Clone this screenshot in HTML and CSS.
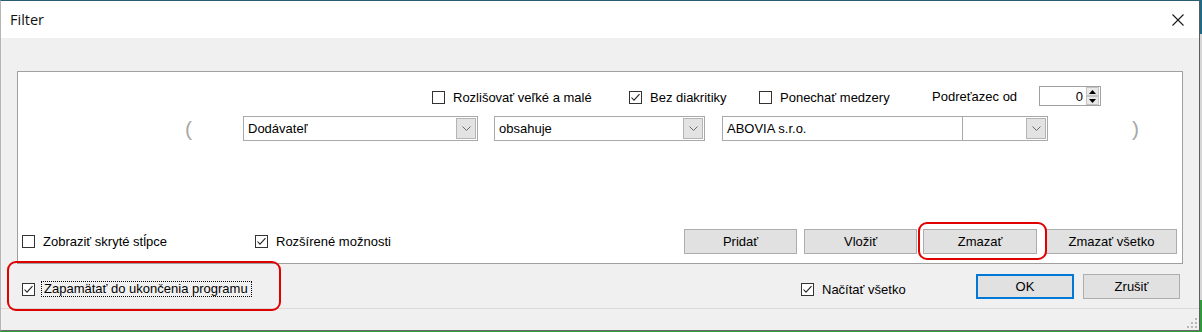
FILE: index.html
```html
<!DOCTYPE html>
<html lang="sk">
<head>
<meta charset="utf-8">
<title>Filter</title>
<link rel="stylesheet" href="styles.css">
</head>
<body>
<div class="window">
  <div class="titlebar">
    <span class="title">Filter</span>
    <svg class="close" width="12" height="12" viewBox="0 0 12 12"><path d="M0.5 0.5 L11.5 11.5 M11.5 0.5 L0.5 11.5" stroke="#1a1a1a" stroke-width="1.1" fill="none"/></svg>
  </div>
  <div class="client">
    <div class="panel">
      <div class="row row-opts">
        <label class="cb w-case"><span class="box"></span><span class="cb-text">Rozlišovať veľké a malé</span></label>
        <label class="cb w-diak"><span class="box"><svg width="11" height="11" viewBox="0 0 11 11"><path d="M1.5 5.5 L4 8.2 L9.5 2.2" stroke="#222" stroke-width="1.1" fill="none"/></svg></span><span class="cb-text">Bez diakritiky</span></label>
        <label class="cb w-space"><span class="box"></span><span class="cb-text">Ponechať medzery</span></label>
        <span class="sub-label">Podreťazec od</span>
        <div class="spin">
          <span class="spin-val">0</span>
          <div class="spin-btns">
            <span class="spin-btn"><svg width="9" height="5" viewBox="0 0 9 5"><path d="M4.5 0 L9 5 L0 5 Z" fill="#000"/></svg></span>
            <span class="spin-btn"><svg width="9" height="5" viewBox="0 0 9 5"><path d="M0 0 L9 0 L4.5 5 Z" fill="#000"/></svg></span>
          </div>
        </div>
      </div>
      <div class="row row-cond">
        <span class="paren paren-open">(</span>
        <div class="combo combo-col">
          <span class="combo-text">Dodávateľ</span>
          <span class="drop"><svg width="9" height="5" viewBox="0 0 9 5"><path d="M0.5 0.5 L4.5 4.5 L8.5 0.5" stroke="#6a6a6a" stroke-width="1" fill="none"/></svg></span>
        </div>
        <div class="combo combo-op">
          <span class="combo-text">obsahuje</span>
          <span class="drop"><svg width="9" height="5" viewBox="0 0 9 5"><path d="M0.5 0.5 L4.5 4.5 L8.5 0.5" stroke="#6a6a6a" stroke-width="1" fill="none"/></svg></span>
        </div>
        <div class="value">
          <span class="value-text">ABOVIA s.r.o.</span>
          <div class="value-combo">
            <span class="drop"><svg width="9" height="5" viewBox="0 0 9 5"><path d="M0.5 0.5 L4.5 4.5 L8.5 0.5" stroke="#6a6a6a" stroke-width="1" fill="none"/></svg></span>
          </div>
        </div>
        <span class="paren paren-close">)</span>
      </div>
      <div class="row row-actions">
        <label class="cb w-hidden"><span class="box"></span><span class="cb-text">Zobraziť skryté stĺpce</span></label>
        <label class="cb"><span class="box"><svg width="11" height="11" viewBox="0 0 11 11"><path d="M1.5 5.5 L4 8.2 L9.5 2.2" stroke="#222" stroke-width="1.1" fill="none"/></svg></span><span class="cb-text">Rozšírené možnosti</span></label>
        <div class="actions">
          <button class="btn btn-add">Pridať</button>
          <button class="btn btn-insert">Vložiť</button>
          <button class="btn btn-del">Zmazať</button>
          <button class="btn btn-delall">Zmazať všetko</button>
        </div>
      </div>
    </div>
    <div class="footer">
      <label class="cb cb-remember"><span class="box"><svg width="11" height="11" viewBox="0 0 11 11"><path d="M1.5 5.5 L4 8.2 L9.5 2.2" stroke="#222" stroke-width="1.1" fill="none"/></svg></span><span class="cb-text focus">Zapamätať do ukončenia programu</span></label>
      <label class="cb cb-loadall"><span class="box"><svg width="11" height="11" viewBox="0 0 11 11"><path d="M1.5 5.5 L4 8.2 L9.5 2.2" stroke="#222" stroke-width="1.1" fill="none"/></svg></span><span class="cb-text">Načítať všetko</span></label>
      <button class="btn btn-ok">OK</button>
      <button class="btn btn-cancel">Zrušiť</button>
    </div>
  </div>
  <div class="status">
    <svg class="grip" width="10" height="10" viewBox="0 0 10 10">
      <rect x="8" y="0" width="2" height="2" fill="#b8b8b8"/>
      <rect x="4" y="4" width="2" height="2" fill="#b8b8b8"/>
      <rect x="8" y="4" width="2" height="2" fill="#b8b8b8"/>
      <rect x="0" y="8" width="2" height="2" fill="#b8b8b8"/>
      <rect x="4" y="8" width="2" height="2" fill="#b8b8b8"/>
      <rect x="8" y="8" width="2" height="2" fill="#b8b8b8"/>
    </svg>
  </div>
  <div class="mark mark-remember"></div>
  <div class="mark mark-delete"></div>
</div>
</body>
</html>
```

FILE: styles.css
```css
* { box-sizing: border-box; }
html, body { margin: 0; padding: 0; }
body {
  width: 1202px;
  height: 332px;
  overflow: hidden;
  background: linear-gradient(to bottom, #1f6a86 0, #1f6a86 34px, #d6d6d6 34px, #d6d6d6 300px, #2f9a3a 300px);
  font-family: "Liberation Sans", Arial, sans-serif;
  font-size: 13px;
  color: #000;
}
.window {
  position: relative;
  width: 1200px;
  height: 331px;
  display: flex;
  flex-direction: column;
  border-top: 1px solid #2b5d72;
  border-left: 1px solid #b5b5b5;
  border-right: 1px solid #5c5c5c;
  border-bottom: 1px solid #6a6a6a;
  background: #f0f0f0;
}
.titlebar {
  height: 37px;
  flex: none;
  background: #fff;
  display: flex;
  align-items: center;
  justify-content: space-between;
  padding: 0 15px 0 9px;
}
.title {
  font-family: "Open Sans", "Noto Sans", sans-serif;
  font-size: 14.5px;
  color: #111;
  margin-top: -1px;
}
.close { display: block; margin-top: 1px; }
.client {
  flex: none;
  height: 270px;
  padding: 33px 16px 0 16px;
  display: flex;
  flex-direction: column;
}
.panel {
  height: 193px;
  flex: none;
  background: #fff;
  border: 1px solid #a0a0a0;
  display: flex;
  flex-direction: column;
  padding: 15px 5px 9px 4px;
}
.row { display: flex; align-items: center; }
.row-opts { height: 20px; padding-left: 410px; }
.row-cond { height: 25px; margin-top: 9px; padding-left: 163px; }
.row-actions { height: 25px; margin-top: auto; }

.cb { display: flex; align-items: center; white-space: nowrap; }
.box {
  width: 13px;
  height: 13px;
  flex: none;
  border: 1px solid #333;
  background: #fff;
  display: flex;
  align-items: center;
  justify-content: center;
}
.box svg { display: block; }
.cb-text { margin-left: 8px; line-height: 15px; }
.w-case { width: 197px; }
.w-diak { width: 130px; }
.w-space { width: 173px; }
.w-hidden { width: 233px; }
.sub-label { width: 107px; margin-top: -2px; }
.spin {
  width: 62px;
  height: 20px;
  border: 1px solid #a0a0a0;
  background: #fff;
  display: flex;
  align-items: center;
  justify-content: flex-end;
  padding-right: 1px;
  margin-top: -2px;
}
.spin-val { margin-right: 3px; }
.spin-btns { display: flex; flex-direction: column; height: 18px; width: 13px; }
.spin-btn {
  flex: 1;
  background: #e8e8e8;
  border: 1px solid #c4c4c4;
  display: flex;
  align-items: center;
  justify-content: center;
}
.spin-btn svg { display: block; width: 7px; height: 4px; }

.paren {
  font-size: 21px;
  color: #a8a8a8;
  line-height: 25px;
}
.paren-open { width: 58px; padding-left: 0; }
.paren-close { margin-left: 84px; }
.combo {
  height: 25px;
  border: 1px solid #a9a9a9;
  background: #fff;
  display: flex;
  align-items: center;
  justify-content: space-between;
  padding: 0 1px 0 4px;
}
.combo-col { width: 235px; }
.combo-op { width: 211px; margin-left: 16px; }
.drop {
  width: 20px;
  height: 21px;
  background: #e3e3e3;
  border: 1px solid #b4b4b4;
  display: flex;
  align-items: center;
  justify-content: center;
}
.drop svg { display: block; }
.value {
  width: 326px;
  height: 25px;
  margin-left: 17px;
  border: 1px solid #a9a9a9;
  background: #fff;
  display: flex;
  align-items: center;
}
.value-text { width: 239px; padding-left: 4px; }
.value-combo {
  flex: 1;
  height: 100%;
  border-left: 1px solid #a9a9a9;
  display: flex;
  align-items: center;
  justify-content: flex-end;
  padding-right: 1px;
}

.actions { margin-left: auto; display: flex; }
.btn {
  font-family: "Liberation Sans", Arial, sans-serif;
  font-size: 13px;
  color: #000;
  height: 25px;
  background: #e1e1e1;
  border: 1px solid #adadad;
  padding: 0;
}
.btn-add { width: 113px; }
.btn-insert { width: 113px; margin-left: 7px; }
.btn-del { width: 114px; margin-left: 6px; }
.btn-delall { width: 131px; margin-left: 9px; }

.footer {
  flex: 1;
  display: flex;
  align-items: center;
  padding: 0 3px 0 5px;
}
.cb-remember { width: 779px; margin-top: 6px; }
.cb-remember .cb-text { margin-left: 6px; padding: 0 3px 0 2px; border: 1px dotted #000; line-height: 14px; }
.cb-loadall { width: 175px; margin-top: 6px; }
.btn-ok { width: 98px; border: 2px solid #0078d7; }
.btn-cancel { width: 97px; margin-left: 9px; }

.status {
  flex: 1;
  border-top: 1px solid #dadada;
  display: flex;
  justify-content: flex-end;
  align-items: flex-end;
  padding: 0 2px 2px 0;
}
.grip { display: block; }

.mark {
  position: absolute;
  border: 2.5px solid #e00000;
  border-radius: 9px;
}
.mark-remember { left: 6px; top: 260px; width: 274px; height: 50px; }
.mark-delete { left: 917px; top: 221px; width: 129px; height: 38px; }
```
